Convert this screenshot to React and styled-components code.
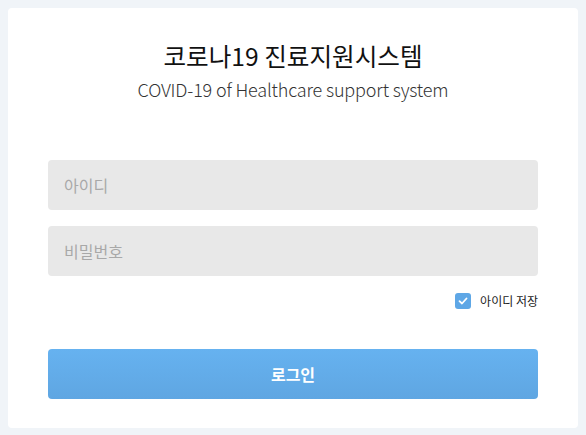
import React, { useState } from 'react'
import styled, { createGlobalStyle } from 'styled-components'

const GlobalStyle = createGlobalStyle`
  body {
    margin: 0;
    background: #f0f4f8;
    font-family: 'Noto Sans CJK KR', 'Noto Sans', sans-serif;
  }
`

const Page = styled.main`
  padding: 8px;
`

const Card = styled.section`
  background: #fff;
  border-radius: 4px;
  padding: 30px 40px 29px;
  display: flex;
  flex-direction: column;
`

const Title = styled.h1`
  margin: 0;
  text-align: center;
  font-size: 24.6px;
  font-weight: 400;
  line-height: 34px;
  color: #111;
`

const SubTitle = styled.p`
  margin: 4px 0 0;
  text-align: center;
  font-size: 18px;
  font-weight: 300;
  letter-spacing: -0.16px;
  line-height: 26px;
  color: #333;
`

const Form = styled.form`
  margin-top: 58px;
  display: flex;
  flex-direction: column;
  gap: 16px;
`

const Input = styled.input`
  height: 50px;
  box-sizing: border-box;
  border: 0;
  border-radius: 4px;
  background: #e8e8e8;
  padding: 0 16px;
  font-family: inherit;
  font-size: 16px;
  color: #333;
  outline: none;
  &::placeholder {
    color: #a8a8a8;
  }
`

const SaveRow = styled.label`
  display: flex;
  justify-content: flex-end;
  align-items: center;
  gap: 9px;
  font-size: 12px;
  color: #222;
  cursor: pointer;
`

const Check = styled.span`
  width: 16px;
  height: 16px;
  border-radius: 3px;
  background: ${(p) => (p.checked ? '#5ea7e6' : '#ddd')};
  display: flex;
  align-items: center;
  justify-content: center;
`

const Button = styled.button`
  margin-top: 24px;
  height: 50px;
  border: 0;
  border-radius: 4px;
  background: linear-gradient(#66b2f0, #5fa6e2);
  color: #fff;
  font-family: inherit;
  font-size: 16px;
  font-weight: 700;
  cursor: pointer;
`

const App = () => {
  const [save, setSave] = useState(true)
  return (
    <Page>
      <GlobalStyle />
      <Card>
        <Title>코로나19 진료지원시스템</Title>
        <SubTitle>COVID-19 of Healthcare support system</SubTitle>
        <Form onSubmit={(e) => e.preventDefault()}>
          <Input placeholder='아이디' />
          <Input type='password' placeholder='비밀번호' />
          <SaveRow onClick={() => setSave(!save)}>
            <Check checked={save}>
              {save && (
                <svg width='10' height='8' viewBox='0 0 10 8'>
                  <path d='M1.5 4.2 L4 6.5 L8.5 1.5' fill='none' stroke='#fff' strokeWidth='1.8' strokeLinecap='round' strokeLinejoin='round' />
                </svg>
              )}
            </Check>
            아이디 저장
          </SaveRow>
          <Button type='submit'>로그인</Button>
        </Form>
      </Card>
    </Page>
  )
}

export default App
